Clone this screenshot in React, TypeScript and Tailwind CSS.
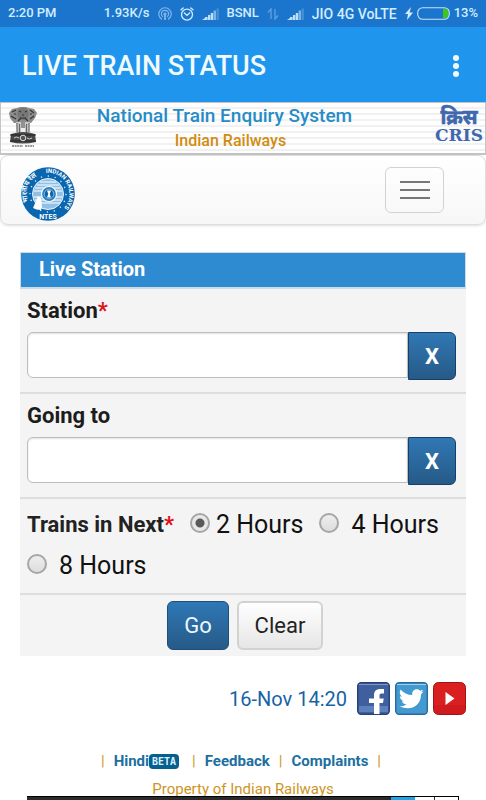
import { useState } from 'react';
import type { ReactNode } from 'react';
import clsx from 'clsx';

const hourOptions = [
  { value: '2', label: '2 Hours', gap: 'gap-1.5' },
  { value: '4', label: '4 Hours', gap: 'gap-3' },
  { value: '8', label: '8 Hours', gap: 'gap-3' },
];

function SignalIcon() {
  return (
    <svg viewBox="0 0 17 12" className="w-[17px] h-3" fill="#bfe0fa">
      <path d="M0 12 L3 10 V12Z" />
      <rect x="3" y="9" width="2.6" height="3" />
      <rect x="6" y="7" width="2.4" height="5" />
      <rect x="8.8" y="5" width="2.4" height="7" />
      <rect x="11.6" y="2.5" width="2.4" height="9.5" opacity=".6" />
      <rect x="14.5" y="0.5" width="2.4" height="11.5" opacity=".25" />
    </svg>
  );
}

function StatusBar() {
  return (
    <div className="flex h-[27px] items-center bg-[#1b75cd] px-2 text-sm font-medium text-[#d3edff]">
      <span className="flex-1 text-[13px]">2:20 PM</span>
      <span className="text-[13px]">1.93K/s</span>
      <svg viewBox="0 0 14 14" className="ml-2 size-3.5" fill="none" stroke="#7fb6e8" strokeWidth="1.2">
        <path d="M4 12.4a6.2 6.2 0 1 1 6 0" />
        <path d="M4.9 9.8a3.6 3.6 0 1 1 4.2 0" />
        <circle cx="7" cy="7" r="1" fill="#7fb6e8" />
        <path d="M7 8v5" strokeWidth="1.8" />
      </svg>
      <svg viewBox="0 0 14 14" className="ml-2 size-3.5" fill="none" stroke="#d3edff" strokeWidth="1.3">
        <circle cx="7" cy="7.6" r="5.5" />
        <path d="M1 2.8 3.2.9M13 2.8 10.8.9M4.4 6 7 8.4 9.6 6" strokeLinecap="round" />
      </svg>
      <span className="ml-2"><SignalIcon /></span>
      <span className="ml-2 text-[13px]">BSNL</span>
      <svg viewBox="0 0 12 12" className="ml-2 size-3" fill="none" stroke="#5a9fdf" strokeWidth="1.4">
        <path d="M4 11V1L1 4.5M8 1v10l3-3.5" />
      </svg>
      <span className="ml-2"><SignalIcon /></span>
      <span className="ml-2">JIO 4G VoLTE</span>
      <svg viewBox="0 0 8 13" className="ml-2 h-[13px] w-2" fill="#d3edff">
        <path d="M6 0 0 7h3L2 13l6-7.5H4.6z" />
      </svg>
      <svg viewBox="0 0 33 13" className="ml-1 h-[13px] w-[33px]">
        <path d="M26 1.5h1a5 5 0 0 1 0 10h-1z" fill="#3fc61c" />
        <rect x=".7" y=".7" width="31.6" height="11.6" rx="5" fill="none" stroke="#c4e4fb" strokeWidth="1.1" />
      </svg>
      <span className="ml-1 text-[13px]">13%</span>
    </div>
  );
}

function Emblem() {
  return (
    <svg viewBox="0 0 30 42" className="h-[42px] w-[30px]">
      <path d="M1 6 4 2l5-1 3-1 6 0 3 1 5 1 3 4-2 5-4 5H6L2 11z" fill="#8b8b8b" />
      <path d="M11 2q4-3 8 0l2 5-2 6h-8L9 7z" fill="#777" />
      <path d="M4 5l4-2M3 9l5 3M22 3l4 3M22 12l4-3M11 4l2 1M19 4l-2 1M14 8h2M12 11h6M6 7h2M22 7h2M10 14l3-3M20 14l-3-3" stroke="#353535" strokeWidth="1.2" />
      <path d="M8 15h14l-1 11H9z" fill="#c9c9c9" />
      <path d="M9 16v9M11.500 17v9M14 15v6M16 15v6M18.500 17v9M21 16v9" stroke="#656565" strokeWidth="1.1" />
      <path d="M13 21h4v5h-4z" fill="#eee" />
      <path d="M3 27q12-4 24 0l1 8q-13 3-26 0z" fill="#484848" />
      <path d="M2 28h26M2 34h26" stroke="#222" strokeWidth="1.2" />
      <circle cx="15" cy="31" r="2.8" fill="#555" stroke="#ddd" />
      <path d="M6 31q2-2 5 0M19 31q2 2 5 0" stroke="#ccc" fill="none" />
      <path d="M4 39h11M17 39h9" stroke="#999" strokeWidth="2" strokeDasharray="2 .6" />
    </svg>
  );
}

function CrisLogo() {
  return (
    <svg viewBox="0 0 50 38" className="h-[38px] w-[50px] overflow-visible" fill="#3f68ae" role="img" aria-label="CRIS">
      <text x="24" y="19" textAnchor="middle" stroke="#3f68ae" strokeWidth=".6" className="font-['Noto_Sans',sans-serif] text-xl font-bold">क्रिस</text>
      <text x="24" y="36" textAnchor="middle" className="font-['DejaVu_Serif',serif] text-[17px] font-bold">CRIS</text>
    </svg>
  );
}

function NtesLogo() {
  return (
    <svg viewBox="0 0 54 54" className="size-[54px]" role="img" aria-label="NTES Indian Railways">
      <defs>
        <path id="ring" d="M25 5.900a21.200 21.200 0 1 1 2 42.300" />
        <path id="ringLeft" d="M8.400 37.700a21.500 21.500 0 0 1 18.600-32.200" />
      </defs>
      <circle cx="27" cy="27" r="26.800" fill="#0a66ae" />
      <g fill="#fff" className="font-['Roboto',sans-serif] font-bold">
        <text className="text-[6px]"><textPath href="#ring">INDIAN RAILWAYS</textPath></text>
        <text className="text-[7px]"><textPath href="#ringLeft" startOffset="3">भारतीय रेल</textPath></text>
        <text x="27" y="52" textAnchor="middle" className="text-[7px]">NTES</text>
      </g>
      <circle cx="27" cy="27" r="18" fill="none" stroke="#d8ecfa" strokeWidth="1.3" strokeDasharray="1.300 5.700" />
      <circle cx="27" cy="27" r="15.500" fill="#8fc0e5" stroke="#e7f4fd" />
      <path d="M16 18h22M14 21h26M13 24h28M13 30h28M14 33h26M15 36h24M19 15h16" stroke="#fff" strokeWidth="1" />
      <path d="M12 41l3-7 2-5 3 2 1 9-1 3q-5 0-8-2z" fill="#fff" />
      <circle cx="28" cy="27" r="7.500" fill="#2a7cbc" stroke="#fff" strokeWidth="1.200" />
      <circle cx="28" cy="27" r="4.800" fill="#0a66ae" stroke="#9cc7e8" strokeWidth=".8" />
      <path d="M26 23.500h4l-1.300 3.500 1.300 3.500h-4l1.300-3.500z" fill="#fff" />
    </svg>
  );
}

function Row({ children, last }: { children: ReactNode; last?: boolean }) {
  return <div className={clsx('px-[7px]', !last && 'border-b-2 border-[#dedede]')}>{children}</div>;
}

function StationField({ id, label, required }: { id: string; label: string; required?: boolean }) {
  const [value, setValue] = useState('');
  return (
    <Row>
      <label htmlFor={id} className="block py-[7px] text-[22px] leading-[29px] font-bold text-[#1c1c1c]">
        {label}
        {required && <span className="text-[#df1018]">*</span>}
      </label>
      <div className="flex items-start pr-[3px] pb-3">
        <input
          id={id}
          type="text"
          value={value}
          onChange={(e) => setValue(e.target.value)}
          className="h-[46px] min-w-0 flex-1 rounded-l-md border border-[#bdbdbd] bg-white px-3 text-xl shadow-[inset_0_1px_2px_rgba(0,0,0,0.12)] outline-none"
        />
        <button
          type="button"
          aria-label={`Clear ${label}`}
          onClick={() => setValue('')}
          className="h-12 w-12 rounded-r-md border border-[#16406a] bg-linear-to-b from-[#3078b4] to-[#265a88] text-[22px] font-bold text-white"
        >
          X
        </button>
      </div>
    </Row>
  );
}

function SocialLinks() {
  return (
    <div className="flex gap-[5px]">
      <a href="#facebook" aria-label="Facebook">
        <svg viewBox="0 0 33 33" className="size-[33px]">
          <rect x=".7" y=".7" width="31.6" height="31.6" rx="3.500" fill="#405f9f" stroke="#254377" strokeWidth="1.400" />
          <path d="M2 24h29v6H2z" fill="#5d80ba" />
          <path d="M2 2.500h29" stroke="#8298c2" />
          <path d="M17 32V21h-5v-4.500h5V13c0-4 2.500-6 6.500-6H27v4.500h-2.500c-1.500 0-2 .8-2 2v3h4.200l-.7 4.500h-3.500v11z" fill="#fff" />
        </svg>
      </a>
      <a href="#twitter" aria-label="Twitter">
        <svg viewBox="0 0 33 33" className="size-[33px]">
          <rect x=".7" y=".7" width="31.6" height="31.6" rx="3.500" fill="#429ad0" stroke="#286a9c" strokeWidth="1.400" />
          <path d="M2 2.500h29" stroke="#a0d0ea" />
          <path d="M28.500 9.500l-2.600.8c1-.7 1.700-1.400 2-2.500l-2.800 1C21.500 5.500 16.500 8 17.300 13 12.500 13 8.500 11 5.500 7.500c-1.500 3-.7 5.500 1.600 7.300l-2.200-.6c.1 2.600 1.700 4.400 4 5l-2 .1c.7 1.800 2.300 3 4.500 3.100-2.200 1.500-4.500 2-7 1.700C14 29.500 26 25 26 12.500z" fill="#fff" />
        </svg>
      </a>
      <a href="#youtube" aria-label="YouTube">
        <svg viewBox="0 0 33 33" className="size-[33px]">
          <rect x=".5" y=".5" width="32" height="32" rx="5" fill="#da1f20" stroke="#a31315" />
          <path d="M1 23h31v5q0 4-4 4H5q-4 0-4-4z" fill="#cf1b1e" />
          <path d="M12.500 10v13l9-6.500z" fill="#fff" />
        </svg>
      </a>
    </div>
  );
}

export default function App() {
  const [hours, setHours] = useState('2');

  return (
    <div className="flex min-h-screen flex-col bg-white font-['Roboto',sans-serif]">
      <StatusBar />

      {/* App bar */}
      <header className="flex h-[75px] items-center justify-between bg-[#1f95ee] pt-0.5 pr-4 pl-[22px]">
        <h1 className="pt-0.5 text-[27px] font-medium text-[#f0faff]">LIVE TRAIN STATUS</h1>
        <button type="button" aria-label="More options" className="px-2 py-3">
          <svg viewBox="0 0 12 24" className="h-6 w-3" fill="#f0faff">
            <circle cx="6" cy="4" r="3" />
            <circle cx="6" cy="12" r="3" />
            <circle cx="6" cy="20" r="3" />
          </svg>
        </button>
      </header>

      {/* Site banner */}
      <div className="flex h-[53px] items-start border border-b-2 border-[#c4c4c4] bg-[repeating-linear-gradient(#fefefe_0px,#fefefe_4px,#f1f1f1_4px,#f1f1f1_6px)] pl-[7px]">
        <div className="w-[50px] pt-1"><Emblem /></div>
        <div className="flex-1 pr-11 text-center font-medium">
          <p className="text-[19px] leading-[26px] text-[#268cc8]">National Train Enquiry System</p>
          <p className="pl-3 text-base leading-6 text-[#d18c10]">Indian Railways</p>
        </div>
        <div className="pt-0.5"><CrisLogo /></div>
      </div>

      <nav className="flex h-[70px] items-center justify-between rounded-lg border border-[#dedede] bg-linear-to-b from-white to-[#f7f7f7] pr-[41px] pl-5 shadow-sm">
        <a href="#home" className="pt-2"><NtesLogo /></a>
        <button type="button" aria-label="Toggle navigation" className="flex h-[46px] w-[59px] flex-col items-center justify-center gap-1.5 rounded-md border border-[#d2d2d2]">
          <span className="h-0.5 w-[30px] bg-[#777]" />
          <span className="h-0.5 w-[30px] bg-[#777]" />
          <span className="h-0.5 w-[30px] bg-[#777]" />
        </button>
      </nav>

      {/* Live station form */}
      <main className="pt-[27px] pr-5 pl-5">
        <form className="bg-[#f4f4f4]" onSubmit={(e) => e.preventDefault()}>
          <h2 className="h-[37px] border border-b-2 border-[#cfdbe4] bg-[#2f8bd1] pl-[18px] text-xl leading-8 font-bold text-white">Live Station</h2>
          <StationField id="station" label="Station" required />
          <StationField id="going-to" label="Going to" />
          <Row>
            <fieldset className="flex flex-wrap items-center gap-x-4 pt-[5px] pb-[7px]">
              <legend className="contents">
                <span className="text-[22px] leading-[41px] font-bold text-[#222]">Trains in Next<span className="text-[#df1018]">*</span></span>
              </legend>
              {hourOptions.map((option) => (
                <label key={option.value} className={clsx('flex items-center text-[25px] leading-[41px] text-[#111]', option.gap)}>
                  <input
                    type="radio"
                    name="hours"
                    value={option.value}
                    checked={hours === option.value}
                    onChange={() => setHours(option.value)}
                    className="mb-1 size-5 appearance-none rounded-full border-2 border-[#a6a6a6] bg-linear-to-b from-[#eee] to-[#ddd] checked:bg-[radial-gradient(circle,#5a5a5a_4px,#e8e8e8_5px)]"
                  />
                  {option.label}
                </label>
              ))}
            </fieldset>
          </Row>
          <Row last>
            <div className="flex justify-center gap-2 py-1.5 pl-1">
              <button type="submit" className="h-[49px] w-[62px] rounded-md border border-[#1d4f7c] bg-linear-to-b from-[#2f78b5] to-[#265a88] text-[22px] text-[#eef7ff]">Go</button>
              <button type="reset" onClick={() => setHours('2')} className="h-[49px] w-[86px] rounded-md border-2 border-[#d2d2d2] bg-linear-to-b from-white to-[#e6e6e6] text-[22px] text-[#222]">Clear</button>
            </div>
          </Row>
        </form>

        <div className="mt-[26px] flex items-center justify-end gap-2.5">
          <time className="text-xl text-[#1763a6]">16-Nov 14:20</time>
          <SocialLinks />
        </div>
      </main>

      <footer className="pt-8 text-center text-[#cf9524]">
        <div className="flex items-center justify-center gap-[9px] pr-1 text-[15px] leading-7 font-bold">
          <span className="font-normal">|</span>
          <a href="#hindi" className="mr-1 flex items-center text-[#206f9f]">
            Hindi
            <span className="rounded-sm bg-[#075f8d] px-[3px] font-['DejaVu_Sans_Mono',monospace] text-[10px] leading-[15px] text-[#d8f1ff]">BETA</span>
          </a>
          <span className="font-normal">|</span>
          <a href="#feedback" className="text-[#206f9f]">Feedback</a>
          <span className="font-normal">|</span>
          <a href="#complaints" className="text-[#206f9f]">Complaints</a>
          <span className="font-normal">|</span>
        </div>
        <p className="h-[27px] overflow-hidden text-[15px] leading-7">Property of Indian Railways</p>
      </footer>

      {/* Ad strip along the bottom edge */}
      <aside aria-label="Advertisement" className="fixed right-[27px] bottom-0 left-[27px] flex h-1 justify-end border-t border-black bg-[#2b2b2d]">
        <span className="w-6 bg-[#1ba8e8]" />
        <span className="w-5 border-r border-[#333] bg-white" />
        <span className="w-6 border-r border-black bg-white" />
      </aside>
    </div>
  );
}
